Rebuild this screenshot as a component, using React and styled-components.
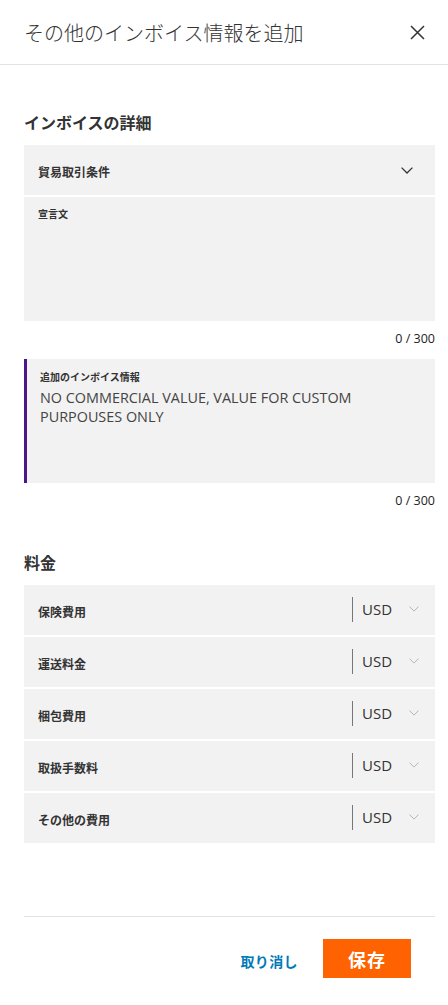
import React from "react";
import styled, { createGlobalStyle } from "styled-components";

const GlobalStyle = createGlobalStyle`
  body {
    margin: 0;
    background: #fff;
    font-family: "Noto Sans CJK JP", "Open Sans", sans-serif;
    color: #333;
  }
`;

const Page = styled.div`
  width: 448px;
  min-height: 1005px;
  background: #fff;
`;

const Header = styled.header`
  height: 64px;
  display: flex;
  align-items: center;
  justify-content: space-between;
  padding: 0 24px;
  border-bottom: 1px solid #e3e3e3;
`;

const Title = styled.h1`
  margin: 0;
  font-size: 20px;
  font-weight: 300;
  color: #333;
`;

const CloseButton = styled.button`
  border: 0;
  background: none;
  padding: 0;
  width: 16px;
  height: 16px;
  display: flex;
  align-items: center;
  justify-content: center;
  margin-right: -1px;
  cursor: pointer;
`;

const Body = styled.main`
  padding: 45px 13px 0 24px;
`;

const SectionTitle = styled.h2`
  margin: ${(p) => (p.$first ? "0" : "40px")} 0 11px;
  font-size: 16px;
  line-height: 24px;
  font-weight: 700;
  color: #333;
`;

const SelectBox = styled.div`
  height: 50px;
  background: #f2f2f2;
  display: flex;
  align-items: center;
  justify-content: space-between;
  padding: 0 22px 0 14px;
  margin-bottom: 2px;
`;

const FieldLabel = styled.span`
  font-size: 12px;
  font-weight: 700;
  color: #333;
  padding-top: 2px;
`;

const TextBox = styled.div`
  height: 124px;
  box-sizing: border-box;
  background: #f2f2f2;
  padding: ${(p) => (p.$active ? "11px 14px 0 13px" : "10px 14px 0 14px")};
  border-left: ${(p) => (p.$active ? "3px solid #4d148c" : "0")};
`;

const SmallLabel = styled.div`
  font-size: 10px;
  line-height: 14px;
  font-weight: 700;
  color: #333;
`;

const TextValue = styled.div`
  margin-top: 4px;
  font-family: "Open Sans", "Noto Sans CJK JP", sans-serif;
  font-size: 14.4px;
  line-height: 19px;
  color: #444;
  width: 340px;
`;

const Counter = styled.div`
  margin: 9px 0 11px;
  text-align: right;
  font-family: "Open Sans", sans-serif;
  font-size: 12.5px;
  line-height: 18px;
  font-weight: 500;
  color: #222;
`;

const FeeRow = styled.div`
  height: 50px;
  background: #f2f2f2;
  display: flex;
  align-items: center;
  padding: 0 16px 0 14px;
  margin-bottom: 2px;
`;

const FeeLabel = styled.span`
  flex: 1;
  font-size: 12px;
  font-weight: 700;
  color: #333;
  padding-top: 3px;
`;

const Currency = styled.div`
  display: flex;
  align-items: center;
  height: 25px;
  border-left: 1px solid #777;
  padding-left: 9px;
  margin-top: -2px;
`;

const CurrencyText = styled.span`
  font-family: "Open Sans", sans-serif;
  font-size: 15px;
  color: #333;
  width: 47px;
`;

const Footer = styled.footer`
  margin: 73px 13px 0 24px;
  border-top: 1px solid #e3e3e3;
  padding: 22px 24px 27px 0;
  display: flex;
  justify-content: flex-end;
  align-items: center;
  gap: 25px;
`;

const CancelButton = styled.button`
  border: 0;
  background: none;
  padding: 4px 0 0;
  font-family: "Noto Sans CJK JP", sans-serif;
  font-size: 14px;
  font-weight: 700;
  color: #007ab7;
  letter-spacing: 0.4px;
`;

const SaveButton = styled.button`
  border: 0;
  width: 88px;
  height: 39px;
  background: #ff6200;
  color: #fff;
  font-family: "Noto Sans CJK JP", sans-serif;
  font-size: 18px;
  font-weight: 700;
  letter-spacing: 1px;
`;

const Chevron = ({ size = 12, color = "#333", width = 1.3 }) => (
  <svg width={size} height={size / 2 + 1} viewBox="0 0 12 7" fill="none">
    <path d="M0.6 0.6 L6 6 L11.4 0.6" stroke={color} strokeWidth={width} />
  </svg>
);

const fees = ["保険費用", "運送料金", "梱包費用", "取扱手数料", "その他の費用"];

export default function App() {
  return (
    <Page>
      <GlobalStyle />
      <Header>
        <Title>その他のインボイス情報を追加</Title>
        <CloseButton aria-label="閉じる">
          <svg width="15" height="15" viewBox="0 0 15 15">
            <path d="M1 1 L14 14 M14 1 L1 14" stroke="#333" strokeWidth="1.5" />
          </svg>
        </CloseButton>
      </Header>
      <Body>
        <SectionTitle $first>インボイスの詳細</SectionTitle>
        <SelectBox>
          <FieldLabel>貿易取引条件</FieldLabel>
          <Chevron />
        </SelectBox>
        <TextBox>
          <SmallLabel>宣言文</SmallLabel>
        </TextBox>
        <Counter>0 / 300</Counter>
        <TextBox $active>
          <SmallLabel>追加のインボイス情報</SmallLabel>
          <TextValue>NO COMMERCIAL VALUE, VALUE FOR CUSTOM PURPOUSES ONLY</TextValue>
        </TextBox>
        <Counter>0 / 300</Counter>
        <SectionTitle>料金</SectionTitle>
        {fees.map((f) => (
          <FeeRow key={f}>
            <FeeLabel>{f}</FeeLabel>
            <Currency>
              <CurrencyText>USD</CurrencyText>
              <Chevron size={10} color="#aaa" width={1} />
            </Currency>
          </FeeRow>
        ))}
      </Body>
      <Footer>
        <CancelButton>取り消し</CancelButton>
        <SaveButton>保存</SaveButton>
      </Footer>
    </Page>
  );
}
